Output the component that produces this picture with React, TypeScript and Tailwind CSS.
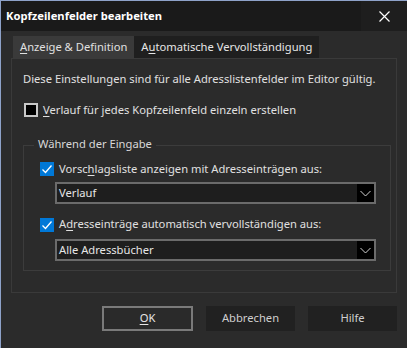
import React, { useState } from "react";

const Check = ({ checked }: { checked: boolean }) =>
  checked ? (
    <span className="w-[14px] h-[14px] bg-[#0078d7] flex items-center justify-center shrink-0">
      <svg width="12" height="12" viewBox="0 0 12 12" fill="none">
        <path d="M1.5 6.5 L4.5 9.5 L10.5 2.5" stroke="white" strokeWidth="1.3" />
      </svg>
    </span>
  ) : (
    <span className="w-[14px] h-[14px] bg-black border-2 border-[#c8c8c8] shrink-0" />
  );

const Select = ({ value }: { value: string }) => (
  <div className="h-[22px] border-2 border-[#6b6b6b] bg-[#1e1e1e] flex items-stretch">
    <div className="flex-1 pl-[2px] leading-[18px] text-[#e6e6e6]">{value}</div>
    <div className="w-[17px] bg-black flex items-center justify-center">
      <svg width="11" height="7" viewBox="0 0 11 7" fill="none">
        <path d="M0.5 1 L5.5 6 L10.5 1" stroke="#d0d0d0" strokeWidth="1" />
      </svg>
    </div>
  </div>
);

const App: React.FC = () => {
  const [history, setHistory] = useState(false);

  return (
    <div
      className="w-[407px] h-[348px] bg-[#2b2b2b] border-l border-t border-[#8ea2c9] flex flex-col text-[11.2px] text-[#e0e0e0] overflow-hidden"
      style={{ fontFamily: '"Noto Sans", "Open Sans", sans-serif' }}
    >
      <div className="h-[30px] bg-[#1a1a1a] flex items-center shrink-0">
        <div className="flex-1 pl-[5px] pt-[1px] font-bold text-white">Kopfzeilenfelder bearbeiten</div>
        <div className="w-[46px] h-full bg-[#1e1e1e] flex items-center justify-center">
          <svg width="11" height="11" viewBox="0 0 11 11">
            <path d="M0.5 0.5 L10.5 10.5 M10.5 0.5 L0.5 10.5" stroke="white" strokeWidth="1.2" />
          </svg>
        </div>
      </div>

      <div className="flex pl-[12px] pt-[5px] shrink-0">
        <div className="h-[22px] px-[7px] bg-[#3a3a3a] leading-[22px] text-[#e0e0e0]">
          <span className="underline underline-offset-2">A</span>nzeige &amp; Definition
        </div>
        <div className="h-[22px] px-[7px] bg-[#1f1f1f] leading-[22px] text-[#e6e6e6]">
          A<span className="underline underline-offset-2">u</span>tomatische Vervollständigung
        </div>
      </div>

      <div className="mx-[10px] h-[235px] border border-[#3a3a3a] pl-[11px] pr-[5px] pt-[12px]">
        <div className="whitespace-nowrap">Diese Einstellungen sind für alle Adresslistenfelder im Editor gültig.</div>
        <button
          className="flex items-center gap-[5px] mt-[14px] ml-[1px]"
          onClick={() => setHistory(!history)}
        >
          <Check checked={history} />
          <span>
            <span className="underline underline-offset-2">V</span>erlauf für jedes Kopfzeilenfeld einzeln erstellen
          </span>
        </button>

        <div className="relative mt-[26px] h-[126px] border border-[#3c3c3c] pl-[16px] pr-[14px] pt-[15px]">
          <div className="absolute -top-[10px] left-[10px] px-[4px] bg-[#2b2b2b] text-[#d8d8d8]">
            Während der Eingabe
          </div>
          <div className="flex items-center gap-[5px]">
            <Check checked />
            <span>
              Vorsc<span className="underline underline-offset-2">h</span>lagsliste anzeigen mit Adresseinträgen aus:
            </span>
          </div>
          <div className="mt-[5px] ml-[15px]">
            <Select value="Verlauf" />
          </div>
          <div className="flex items-center gap-[5px] mt-[12px]">
            <Check checked />
            <span>
              A<span className="underline underline-offset-2">d</span>resseinträge automatisch vervollständigen aus:
            </span>
          </div>
          <div className="mt-[6px] ml-[15px]">
            <Select value="Alle Adressbücher" />
          </div>
        </div>
      </div>

      <div className="flex justify-end gap-[13px] pr-[10px] pt-[13px]">
        <button className="w-[91px] h-[25px] border-2 border-[#7a7a7a] bg-[#2a2a2a] text-[#e6e6e6]">
          <span className="underline underline-offset-2">O</span>K
        </button>
        <button className="w-[89px] h-[25px] bg-[#212121] text-[#cfcfcf]">Abbrechen</button>
        <button className="w-[89px] h-[25px] bg-[#212121] text-[#cfcfcf]">Hilfe</button>
      </div>
    </div>
  );
};

export default App;
